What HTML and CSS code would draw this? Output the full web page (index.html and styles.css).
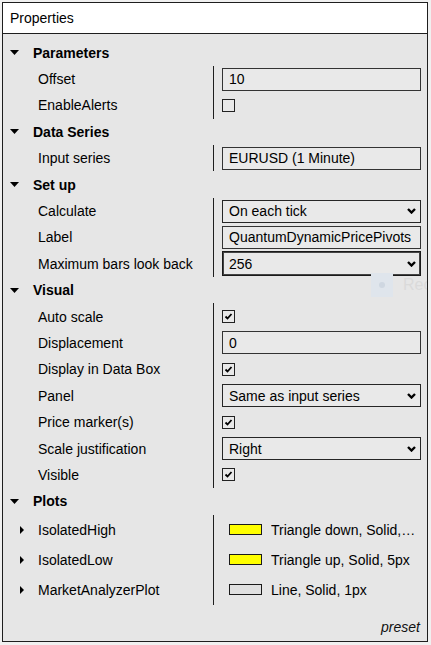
FILE: index.html
```html
<!DOCTYPE html>
<html>
<head>
<meta charset="utf-8">
<link rel="stylesheet" href="styles.css">
</head>
<body>
<div class="panel">
  <div class="title">Properties</div>
  <div class="content">
    <section class="group">
      <div class="ghead"><svg class="tri-down" width="9" height="5" viewBox="0 0 9 5"><path d="M0 0H9L4.5 5Z"/></svg><span>Parameters</span></div>
      <div class="rows">
        <div class="row"><div class="lbl">Offset</div><div class="val"><div class="field">10</div></div></div>
        <div class="row"><div class="lbl">EnableAlerts</div><div class="val"><span class="cb"></span></div></div>
      </div>
    </section>
    <section class="group">
      <div class="ghead"><svg class="tri-down" width="9" height="5" viewBox="0 0 9 5"><path d="M0 0H9L4.5 5Z"/></svg><span>Data Series</span></div>
      <div class="rows">
        <div class="row"><div class="lbl">Input series</div><div class="val"><div class="field">EURUSD (1 Minute)</div></div></div>
      </div>
    </section>
    <section class="group">
      <div class="ghead"><svg class="tri-down" width="9" height="5" viewBox="0 0 9 5"><path d="M0 0H9L4.5 5Z"/></svg><span>Set up</span></div>
      <div class="rows">
        <div class="row"><div class="lbl">Calculate</div><div class="val"><div class="field select"><span>On each tick</span><svg class="chev" width="9" height="6" viewBox="0 0 9 6"><path d="M1 1L4.5 4.5L8 1"/></svg></div></div></div>
        <div class="row"><div class="lbl">Label</div><div class="val"><div class="field">QuantumDynamicPricePivots</div></div></div>
        <div class="row"><div class="lbl">Maximum bars look back</div><div class="val"><div class="field select focus"><span>256</span><svg class="chev" width="9" height="6" viewBox="0 0 9 6"><path d="M1 1L4.5 4.5L8 1"/></svg></div></div></div>
      </div>
    </section>
    <section class="group">
      <div class="ghead"><svg class="tri-down" width="9" height="5" viewBox="0 0 9 5"><path d="M0 0H9L4.5 5Z"/></svg><span>Visual</span></div>
      <div class="rows">
        <div class="row"><div class="lbl">Auto scale</div><div class="val"><span class="cb"><svg width="11" height="11" viewBox="0 0 11 11"><path d="M2.5 5.5L4.5 7.5L8.5 3"/></svg></span></div></div>
        <div class="row"><div class="lbl">Displacement</div><div class="val"><div class="field">0</div></div></div>
        <div class="row"><div class="lbl">Display in Data Box</div><div class="val"><span class="cb"><svg width="11" height="11" viewBox="0 0 11 11"><path d="M2.5 5.5L4.5 7.5L8.5 3"/></svg></span></div></div>
        <div class="row"><div class="lbl">Panel</div><div class="val"><div class="field select"><span>Same as input series</span><svg class="chev" width="9" height="6" viewBox="0 0 9 6"><path d="M1 1L4.5 4.5L8 1"/></svg></div></div></div>
        <div class="row"><div class="lbl">Price marker(s)</div><div class="val"><span class="cb"><svg width="11" height="11" viewBox="0 0 11 11"><path d="M2.5 5.5L4.5 7.5L8.5 3"/></svg></span></div></div>
        <div class="row"><div class="lbl">Scale justification</div><div class="val"><div class="field select"><span>Right</span><svg class="chev" width="9" height="6" viewBox="0 0 9 6"><path d="M1 1L4.5 4.5L8 1"/></svg></div></div></div>
        <div class="row"><div class="lbl">Visible</div><div class="val"><span class="cb"><svg width="11" height="11" viewBox="0 0 11 11"><path d="M2.5 5.5L4.5 7.5L8.5 3"/></svg></span></div></div>
      </div>
    </section>
    <section class="group">
      <div class="ghead"><svg class="tri-down" width="9" height="5" viewBox="0 0 9 5"><path d="M0 0H9L4.5 5Z"/></svg><span>Plots</span></div>
      <div class="rows">
        <div class="row plot"><div class="lbl"><svg class="tri-right" width="4" height="8" viewBox="0 0 4 8"><path d="M0 0L4 4L0 8Z"/></svg>IsolatedHigh</div><div class="val"><span class="swatch yellow"></span><span class="ptext">Triangle down, Solid,…</span></div></div>
        <div class="row plot"><div class="lbl"><svg class="tri-right" width="4" height="8" viewBox="0 0 4 8"><path d="M0 0L4 4L0 8Z"/></svg>IsolatedLow</div><div class="val"><span class="swatch yellow"></span><span class="ptext">Triangle up, Solid, 5px</span></div></div>
        <div class="row plot"><div class="lbl"><svg class="tri-right" width="4" height="8" viewBox="0 0 4 8"><path d="M0 0L4 4L0 8Z"/></svg>MarketAnalyzerPlot</div><div class="val"><span class="swatch grey"></span><span class="ptext">Line, Solid, 1px</span></div></div>
      </div>
    </section>
    <div class="footer">preset</div>
  </div>
  <div class="ghost"><span class="ghost-box"><span class="ghost-dot"></span></span><span class="ghost-text">Rec</span></div>
</div>
</body>
</html>
```

FILE: styles.css
```css
html, body {
  margin: 0;
  padding: 0;
  background: #f0f0f0;
}
body {
  font-family: "Liberation Sans", Arial, sans-serif;
  font-size: 14px;
  color: #000;
}
.panel {
  position: relative;
  margin: 2px 0 0 2px;
  width: 426px;
  height: 640px;
  box-sizing: border-box;
  border: 1px solid #1e1e1e;
  background: #e6e6e6;
  display: flex;
  flex-direction: column;
  overflow: hidden;
}
.title {
  height: 30px;
  line-height: 30px;
  padding-left: 7px;
  background: #fff;
  border-bottom: 1px solid #1e1e1e;
  flex: none;
}
.content {
  flex: 1;
  display: flex;
  flex-direction: column;
  padding-top: 5.5px;
}
.ghead {
  height: 26.4px;
  display: flex;
  align-items: center;
  padding-left: 7px;
  font-weight: bold;
}
.tri-down {
  fill: #000;
  margin-right: 14px;
  flex: none;
}
.row {
  height: 26.4px;
  display: grid;
  grid-template-columns: 210px 1fr;
}
.row.plot {
  height: 30px;
}
.lbl {
  display: flex;
  align-items: center;
  padding-left: 35px;
  white-space: nowrap;
}
.plot .lbl {
  padding-left: 17px;
}
.tri-right {
  fill: #000;
  margin-right: 14px;
  flex: none;
}
.val {
  border-left: 1px solid #1e1e1e;
  display: flex;
  align-items: center;
  padding: 0 6px 0 8px;
}
.plot .val {
  padding-left: 15px;
}
.field {
  flex: 1;
  height: 23px;
  box-sizing: border-box;
  border: 1px solid #333;
  background: #e9e9e9;
  padding: 0 6px;
  display: flex;
  align-items: center;
  justify-content: space-between;
  white-space: nowrap;
  overflow: hidden;
}
.select {
  border-color: #262626;
  padding-right: 4px;
}
.select.focus {
  height: 25px;
  border-color: #1a1a1a;
  box-shadow: inset 0 0 0 1px #444;
}
.chev {
  fill: none;
  stroke: #000;
  stroke-width: 2.4;
  flex: none;
}
.cb {
  width: 13px;
  height: 13px;
  box-sizing: border-box;
  border: 1px solid #222;
  background: #e9e9e9;
  display: flex;
  align-items: center;
  justify-content: center;
}
.cb svg {
  fill: none;
  stroke: #000;
  stroke-width: 1.8;
}
.swatch {
  width: 33px;
  height: 11px;
  box-sizing: border-box;
  border: 1px solid #1a1a1a;
  margin-right: 9px;
  flex: none;
}
.swatch.yellow {
  background: #ffff00;
}
.swatch.grey {
  background: #e0e0e0;
}
.ptext {
  white-space: nowrap;
  overflow: hidden;
}
.footer {
  margin-top: auto;
  text-align: right;
  font-style: italic;
  padding: 0 7px 6px 0;
  line-height: 16px;
  color: #111;
}
.ghost {
  position: absolute;
  left: 368px;
  top: 270px;
  display: flex;
  align-items: center;
  pointer-events: none;
}
.ghost-box {
  width: 22px;
  height: 24px;
  background: #dfe5ec;
  display: flex;
  align-items: center;
  justify-content: center;
}
.ghost-dot {
  width: 6px;
  height: 6px;
  border-radius: 50%;
  background: #cfd7e1;
}
.ghost-text {
  margin-left: 10px;
  font-size: 16px;
  color: #dadada;
}
```
